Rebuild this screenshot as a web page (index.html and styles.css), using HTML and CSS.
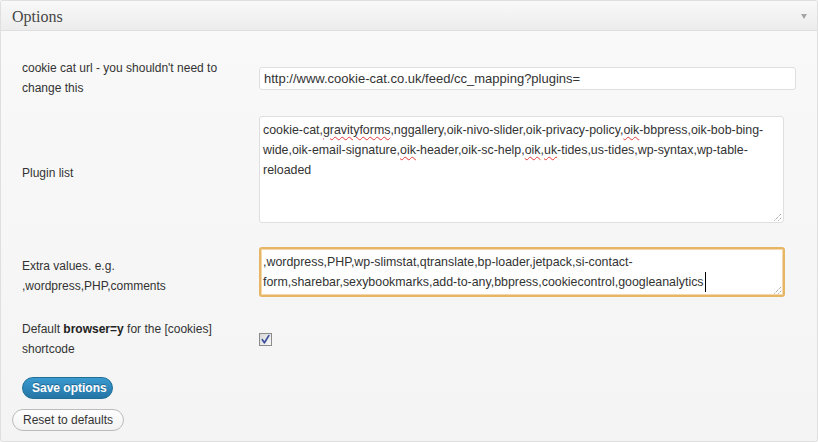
FILE: index.html
```html
<!DOCTYPE html>
<html>
<head>
<meta charset="utf-8">
<title>Options</title>
<link rel="stylesheet" href="styles.css">
</head>
<body>
<div class="postbox">
  <div class="hndle">
    <h3 class="title">Options</h3>
    <span class="toggle"></span>
  </div>
  <div class="inside">
    <div class="rows">
      <div class="row row-1">
        <div class="label">cookie cat url - you shouldn't need to change this</div>
        <div class="field"><div class="input">http://www.cookie-cat.co.uk/feed/cc_mapping?plugins=</div></div>
      </div>
      <div class="row row-2">
        <div class="label label-low">Plugin list</div>
        <div class="field">
          <div class="textarea ta-plugins">
            <span class="ln">cookie-cat,<span class="sp">gravityforms</span>,nggallery,oik-nivo-slider,oik-privacy-policy,<span class="sp">oik</span>-bbpress,oik-bob-bing-</span>
            <span class="ln">wide,oik-email-signature,<span class="sp">oik</span>-header,oik-sc-help,<span class="sp">oik</span>,<span class="sp">uk</span>-tides,us-tides,wp-syntax,wp-table-</span>
            <span class="ln">reloaded</span>
            <svg class="grip" width="8" height="8" viewBox="0 0 8 8"><path d="M0.5 7.5 L7.5 0.5 M4.5 7.5 L7.5 4.5" stroke="#7a7a7a" stroke-width="1" stroke-dasharray="1 1" fill="none"/></svg>
          </div>
        </div>
      </div>
      <div class="row row-3">
        <div class="label label-low2">Extra values. e.g. ,wordpress,PHP,comments</div>
        <div class="field">
          <div class="textarea ta-extra">
            <span class="ln">,wordpress,PHP,wp-slimstat,qtranslate,bp-loader,jetpack,si-contact-</span>
            <span class="ln">form,sharebar,sexybookmarks,add-to-any,bbpress,cookiecontrol,googleanalytics<span class="caret"></span></span>
            <svg class="grip" width="8" height="8" viewBox="0 0 8 8"><path d="M0.5 7.5 L7.5 0.5 M4.5 7.5 L7.5 4.5" stroke="#7a7a7a" stroke-width="1" stroke-dasharray="1 1" fill="none"/></svg>
          </div>
        </div>
      </div>
      <div class="row row-4">
        <div class="label">Default <b>browser=y</b> for the [cookies] shortcode</div>
        <div class="field">
          <svg class="checkbox" width="13" height="13" viewBox="0 0 13 13">
            <defs><linearGradient id="cbg" x1="0" y1="0" x2="1" y2="1"><stop offset="0" stop-color="#d6d6d6"/><stop offset="1" stop-color="#fbfbfb"/></linearGradient></defs>
            <rect x="0.5" y="0.5" width="12" height="12" fill="url(#cbg)" stroke="#8b8b8b"/>
            <path d="M3.2 6.6 L5.4 9.8 L9.8 2.6" stroke="#3b4f9e" stroke-width="1.7" fill="none" stroke-linecap="round" stroke-linejoin="round"/>
          </svg>
        </div>
      </div>
    </div>
    <div class="actions-save"><span class="button button-primary">Save options</span></div>
    <div class="actions-reset"><span class="button button-secondary">Reset to defaults</span></div>
  </div>
</div>
</body>
</html>
```

FILE: styles.css
```css
html, body {
  margin: 0;
  padding: 0;
  background: #f5f5f5;
}
body {
  font-family: "Liberation Sans", Arial, sans-serif;
  color: #333;
  font-size: 12px;
}
.postbox {
  box-sizing: border-box;
  width: 818px;
  height: 442px;
  border: 1px solid #dfdfdf;
  border-radius: 3px;
  background: linear-gradient(#f9f9f9, #f4f4f4);
  overflow: hidden;
}
.hndle {
  box-sizing: border-box;
  height: 30px;
  border-bottom: 1px solid #dfdfdf;
  background: linear-gradient(#f9f9f9, #ececec);
  display: flex;
  justify-content: space-between;
  align-items: flex-start;
  padding: 2px 10px 0 11px;
}
.title {
  margin: 0;
  font-family: "Liberation Serif", "Times New Roman", serif;
  font-weight: normal;
  font-size: 16px;
  line-height: 27px;
  color: #464646;
}
.toggle {
  margin-top: 11px;
  width: 0;
  height: 0;
  border-left: 3.5px solid transparent;
  border-right: 3.5px solid transparent;
  border-top: 5px solid #a5a5a5;
}
.inside {
  padding-top: 18px;
}
.rows {
  padding-left: 21px;
}
.row {
  display: flex;
  align-items: center;
  padding: 9px 0;
}
.row-3 { padding-top: 15px; }
.row-4 { padding-top: 13px; }
.label {
  box-sizing: border-box;
  width: 237px;
  flex: none;
  padding-right: 30px;
  font-size: 12px;
  line-height: 20px;
  color: #333;
}
.label b { color: #222; }
.label-low { padding-top: 6px; }
.label-low2 { padding-top: 7px; }
.field {
  flex: none;
  display: flex;
  align-items: center;
}
.input {
  box-sizing: border-box;
  width: 537px;
  height: 23px;
  border: 1px solid #dfdfdf;
  border-radius: 3px;
  background: #fff;
  padding: 0 4px;
  font-size: 13px;
  line-height: 21px;
  color: #333;
  white-space: nowrap;
}
.textarea {
  position: relative;
  box-sizing: border-box;
  background: #fff;
  border-radius: 3px;
  font-size: 12.4px;
  line-height: 20px;
  color: #333;
}
.ln {
  display: block;
  white-space: nowrap;
}
.ta-plugins {
  width: 525px;
  height: 107px;
  border: 1px solid #dfdfdf;
  padding: 3px 3px;
}
.ta-extra {
  width: 526px;
  height: 50px;
  border: 2px solid #e6b565;
  padding: 3px 3px 3px 2px;
  box-shadow: inset 0 0 0 1px #f3d9a8;
}
.sp {
  text-decoration: underline wavy #e23a3a;
  text-decoration-thickness: 1px;
  text-underline-offset: 2px;
}
.caret {
  display: inline-block;
  width: 1px;
  height: 20px;
  background: #000;
  vertical-align: top;
  margin-left: 1px;
}
.grip {
  position: absolute;
  right: 1px;
  bottom: 1px;
}
.checkbox {
  display: block;
  margin-top: 0;
}
.actions-save {
  padding: 9px 0 0 21px;
  display: flex;
}
.actions-reset {
  padding: 10px 0 0 11px;
  display: flex;
}
.button {
  box-sizing: border-box;
  display: inline-block;
  border-radius: 11px;
  font-size: 12px;
  white-space: nowrap;
}
.button-primary {
  height: 22px;
  line-height: 20px;
  padding: 0 9px;
  width: 91px;
  text-align: center;
  color: #fff;
  font-weight: bold;
  border: 1px solid #1f6f96;
  background: linear-gradient(#3a9ad0, #2475a5);
  text-shadow: 0 -1px 0 rgba(0,0,0,0.3);
}
.button-secondary {
  height: 22px;
  line-height: 20px;
  padding: 0 8px;
  width: 112px;
  text-align: center;
  color: #333;
  border: 1px solid #bbb;
  background: linear-gradient(#fefefe, #f2f2f2);
}
```
